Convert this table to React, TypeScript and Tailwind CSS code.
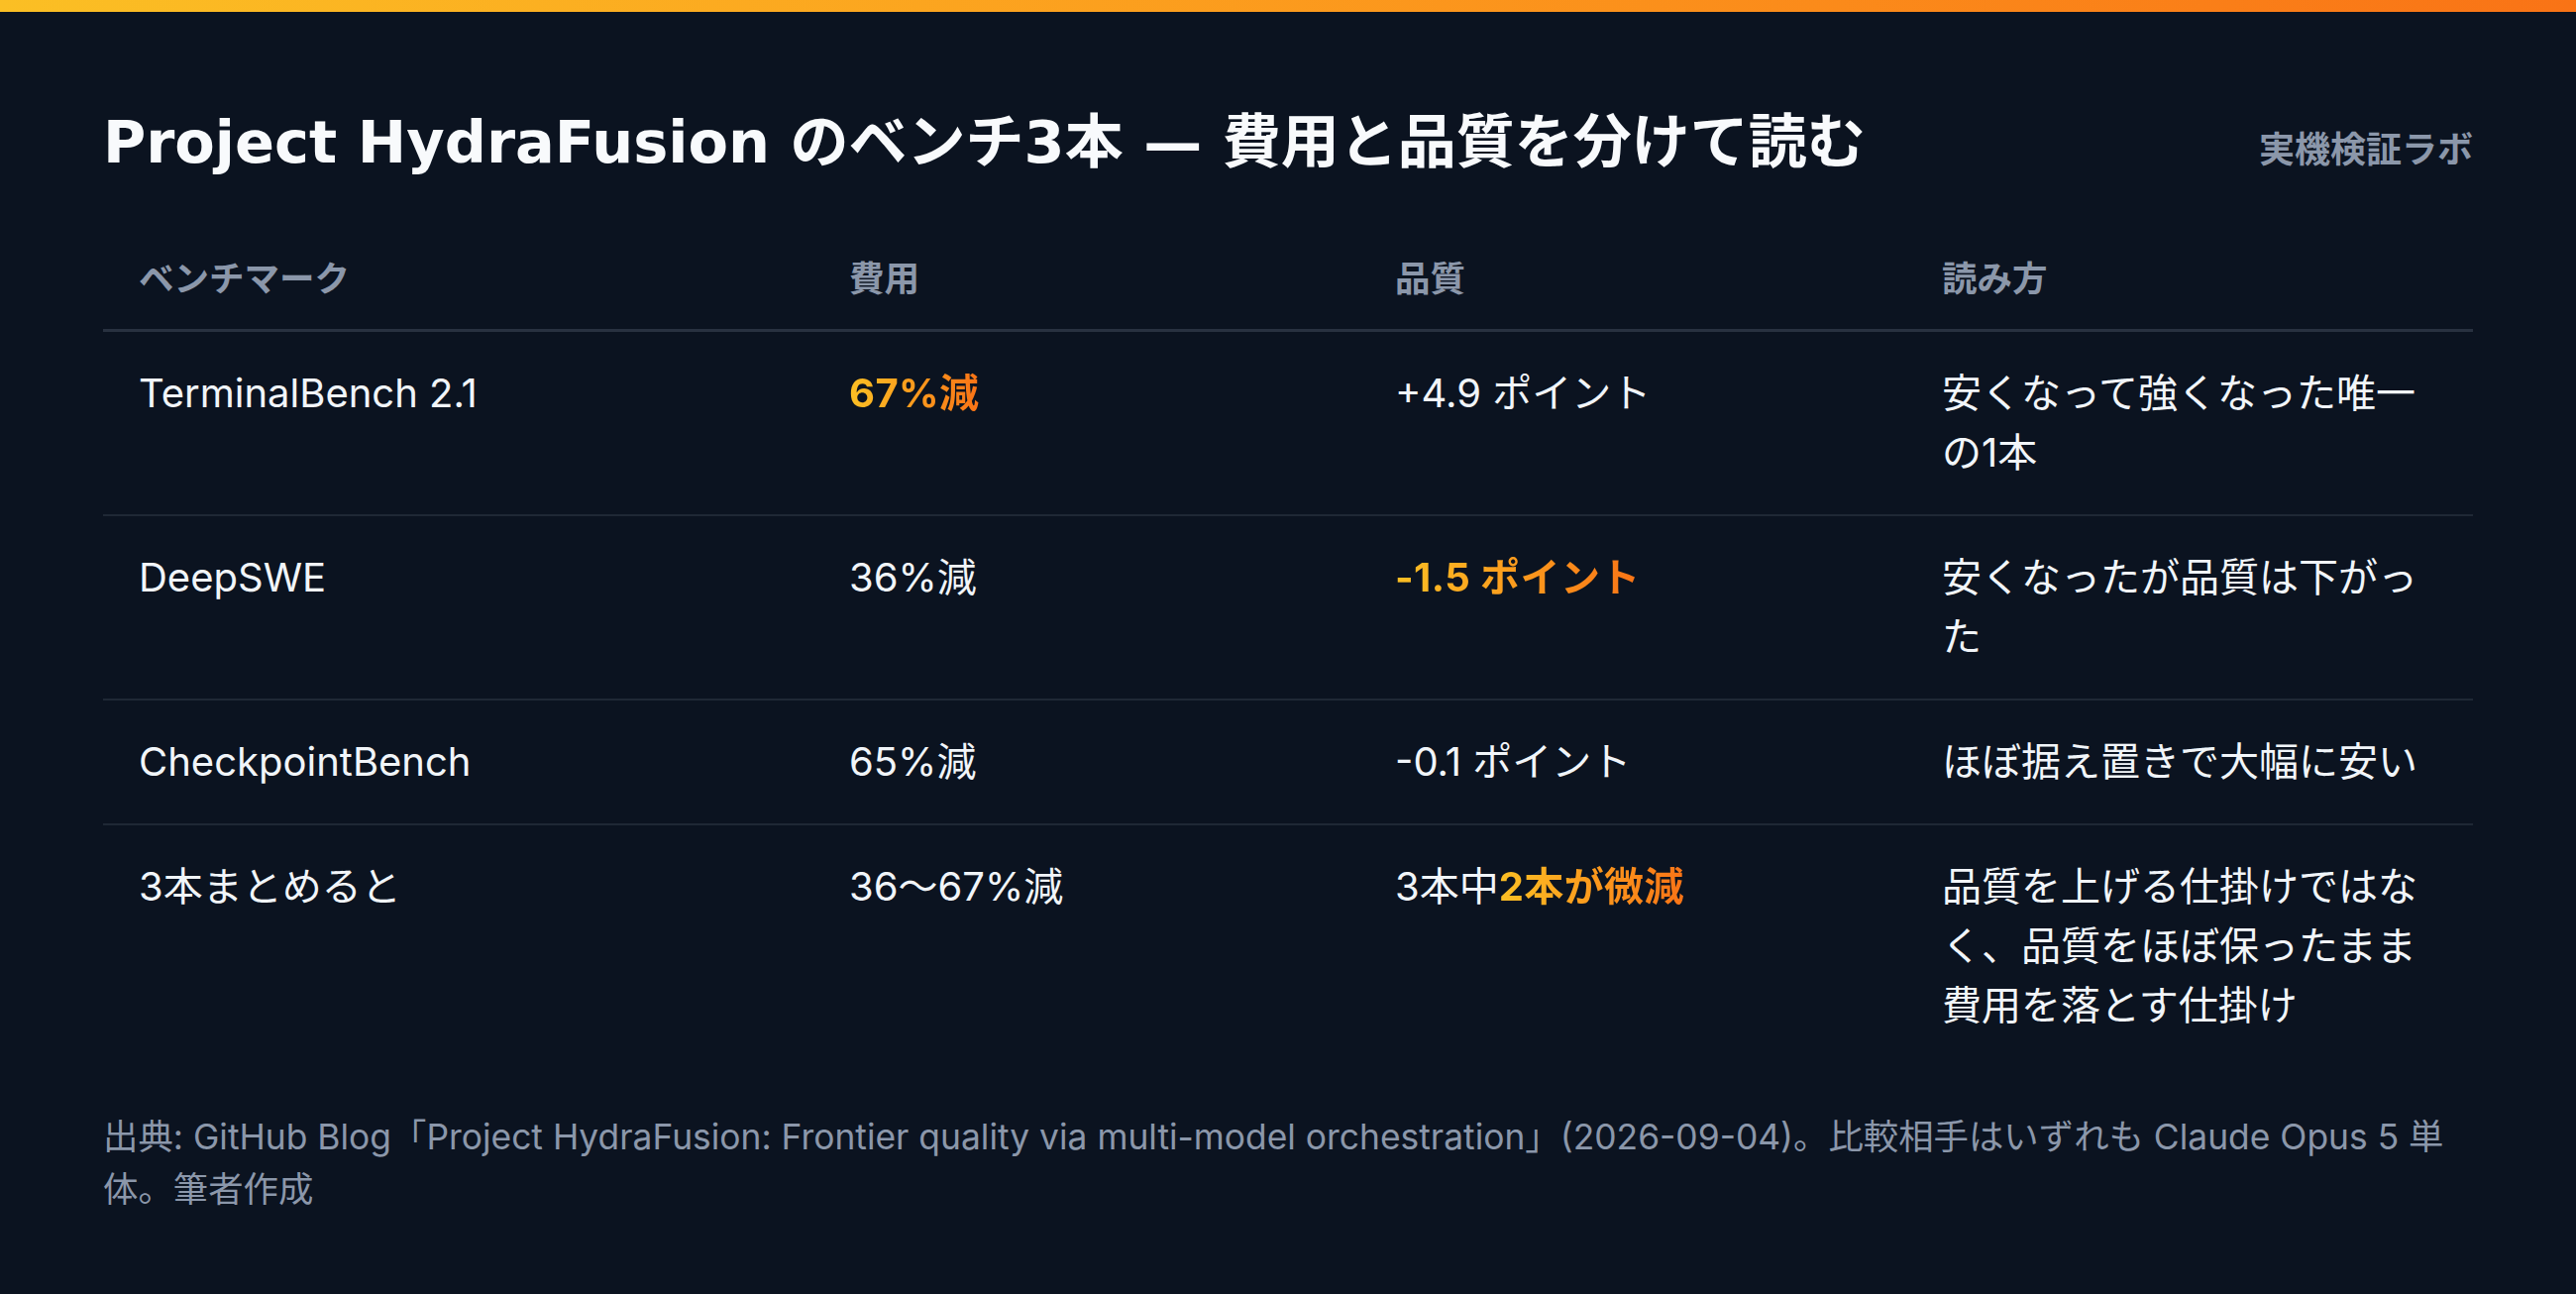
import type { ReactNode } from 'react';

const font = 'font-["Inter","Noto_Sans_CJK_JP",sans-serif]';

const Hi = ({ children }: { children: ReactNode }) => (
  <span className="font-bold tracking-[0.4px] bg-gradient-to-r from-[#fbbf24] to-[#f97316] bg-clip-text text-transparent">
    {children}
  </span>
);

type Row = { name: string; cost: ReactNode; quality: ReactNode; note: string };

const rows: Row[] = [
  {
    name: 'TerminalBench 2.1',
    cost: <Hi>67%減</Hi>,
    quality: '+4.9 ポイント',
    note: '安くなって強くなった唯一の1本',
  },
  {
    name: 'DeepSWE',
    cost: '36%減',
    quality: <Hi>-1.5 ポイント</Hi>,
    note: '安くなったが品質は下がった',
  },
  {
    name: 'CheckpointBench',
    cost: '65%減',
    quality: '-0.1 ポイント',
    note: 'ほぼ据え置きで大幅に安い',
  },
  {
    name: '3本まとめると',
    cost: '36〜67%減',
    quality: (
      <>
        3本中<Hi>2本が微減</Hi>
      </>
    ),
    note: '品質を上げる仕掛けではなく、品質をほぼ保ったまま費用を落とす仕掛け',
  },
];

const cols = 'grid grid-cols-[717px_551px_552px_570px]';

export default function App() {
  return (
    <div className={`min-h-[1306px] bg-[#0b1320] ${font}`}>
      <div className="h-[12px] bg-gradient-to-r from-[#fbbf24] to-[#f97316]" />

      <div className="px-[104px] pt-[96px]">
        {/* Title */}
        <div className="flex items-center justify-between">
          <h1 className='font-["DejaVu_Sans","Noto_Sans_CJK_JP",sans-serif] text-[59px] leading-[72px] font-bold text-[#f8fafc]'>
            Project HydraFusion のベンチ3本 — 費用と品質を分けて読む
          </h1>
          <span className="text-[36px] font-semibold text-[#8b97aa] mt-[14px]">実機検証ラボ</span>
        </div>

        {/* Table */}
        <div className="mt-[52px]">
          <div className={`${cols} border-b-[3px] border-[#283140] text-[35.5px] leading-[52px] font-semibold text-[#8b97aa]`}>
            <div className="px-[36px] py-[24px]">ベンチマーク</div>
            <div className="px-[36px] py-[24px]">費用</div>
            <div className="px-[36px] py-[24px]">品質</div>
            <div className="px-[36px] py-[24px]">読み方</div>
          </div>

          {rows.map((r, i) => (
            <div
              key={r.name}
              className={`${cols} text-[40px] leading-[60px] text-[#f1f5f9] ${
                i < rows.length - 1 ? 'border-b-2 border-[#1f2835]' : ''
              }`}
            >
              <div className="px-[36px] py-[32px]">{r.name}</div>
              <div className="px-[36px] py-[32px]">{r.cost}</div>
              <div className="px-[36px] py-[32px]">{r.quality}</div>
              <div className="px-[36px] py-[32px]">{r.note}</div>
            </div>
          ))}
        </div>

        {/* Source */}
        <p className="mt-[44px] text-[35.4px] leading-[53px] text-[#8b97aa]">
          出典: GitHub Blog「Project HydraFusion: Frontier quality via multi-model orchestration」(2026-09-04)。比較相手はいずれも Claude Opus 5 単体。筆者作成
        </p>
      </div>
    </div>
  );
}
